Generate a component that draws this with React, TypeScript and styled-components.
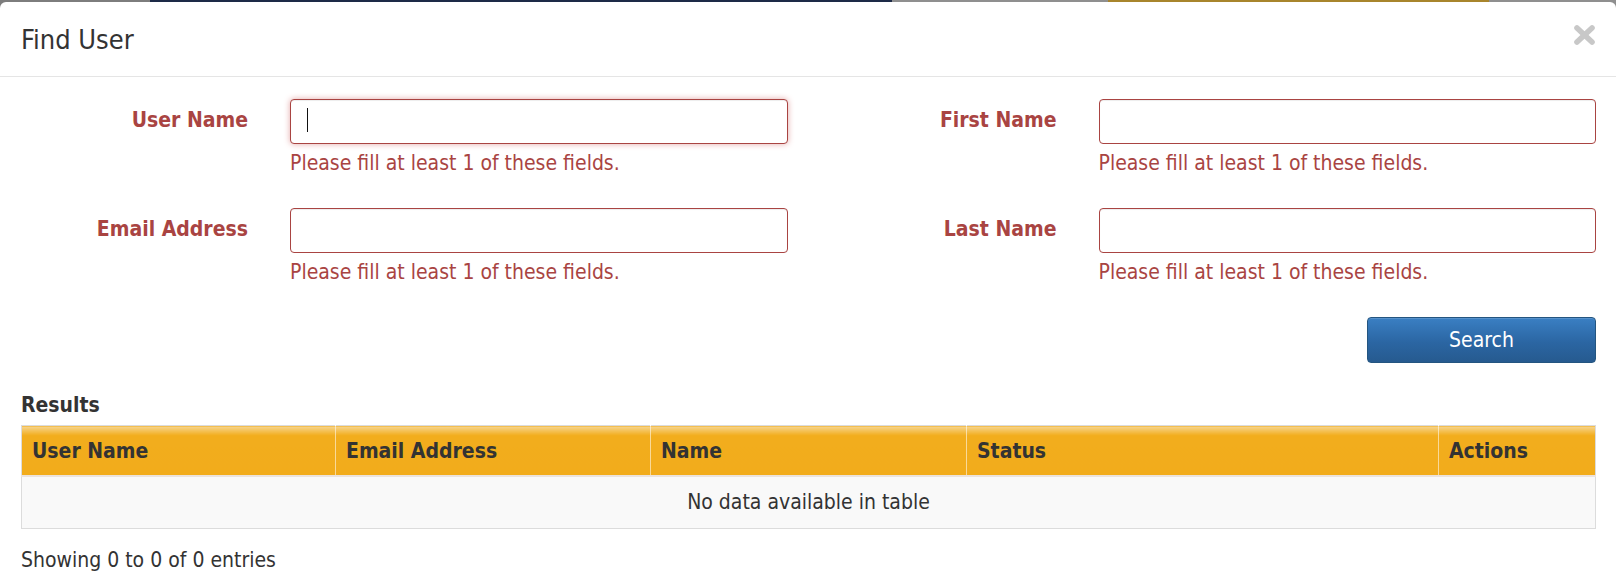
import React from "react";
import styled, { createGlobalStyle } from "styled-components";

const GlobalStyle = createGlobalStyle`
  html, body { margin: 0; padding: 0; }
  body {
    font-family: "DejaVu Sans Condensed", "DejaVu Sans", Verdana, sans-serif;
    color: #333;
    background: #fff;
  }
  * { box-sizing: border-box; }
`;

const Screen = styled.div`
  min-height: 100vh;
  padding-top: 2px;
  background: linear-gradient(
    to right,
    #7d7d7d 0 150px,
    #1d2a47 150px 892px,
    #8f8f8f 892px 1108px,
    #a8852c 1108px 1489px,
    #8f8f8f 1489px
  );
`;

const Modal = styled.div`
  min-height: calc(100vh - 2px);
  background: #fff;
  border-radius: 6px 6px 0 0;
`;

const Header = styled.div`
  height: 75px;
  padding: 1px 20px 0 21px;
  display: flex;
  align-items: center;
  justify-content: space-between;
  border-bottom: 1px solid #e5e5e5;
`;

const Title = styled.h4`
  margin: 0;
  font-size: 27px;
  font-weight: normal;
  color: #333;
`;

const CloseButton = styled.button`
  border: 0;
  background: transparent;
  padding: 0;
  margin: 0 0 9px 0;
  display: flex;
  cursor: pointer;
`;

const Body = styled.div`
  padding: 22px 20px 0 21px;
`;

const FormGrid = styled.div`
  display: grid;
  grid-template-columns: 227px 1fr 227px 1fr;
  column-gap: 42px;
  row-gap: 32px;
`;

const Label = styled.label`
  height: 45px;
  display: flex;
  align-items: center;
  justify-content: flex-end;
  padding-bottom: 3px;
  font-size: 21px;
  font-weight: bold;
  color: #a94442;
  white-space: nowrap;
`;

const Control = styled.div`
  display: flex;
  flex-direction: column;
`;

const InputWrap = styled.div`
  position: relative;
`;

const Input = styled.input<{ $focused?: boolean }>`
  display: block;
  width: 100%;
  height: 45px;
  padding: 6px 12px;
  font-family: inherit;
  font-size: 21px;
  color: #555;
  background: #fff;
  border: 1px solid #a94442;
  border-radius: 4px;
  outline: none;
  box-shadow: ${(p) =>
    p.$focused
      ? "inset 0 1px 1px rgba(0,0,0,.075), 0 0 6px #e4a9a8"
      : "inset 0 1px 1px rgba(0,0,0,.075)"};
`;

const Caret = styled.span`
  position: absolute;
  left: 17px;
  top: 9px;
  width: 1px;
  height: 24px;
  background: #111;
`;

const Help = styled.span`
  display: block;
  margin-top: 7px;
  font-size: 21px;
  line-height: 25px;
  color: #a94442;
  white-space: nowrap;
`;

const ButtonRow = styled.div`
  display: flex;
  justify-content: flex-end;
  margin-top: 32px;
`;

const SearchButton = styled.button`
  width: 229px;
  height: 46px;
  font-family: inherit;
  font-size: 21px;
  color: #fff;
  border: 1px solid #245580;
  border-radius: 4px;
  background: linear-gradient(to bottom, #3a7fc3 0%, #2b66a3 55%, #265a8f 100%);
  box-shadow: inset 0 1px 0 rgba(255,255,255,.15);
  cursor: pointer;
`;

const SectionTitle = styled.h5`
  margin: 30px 0 0;
  font-size: 21px;
  line-height: 25px;
  font-weight: bold;
  color: #333;
`;

const Table = styled.table`
  width: calc(100% - 1px);
  margin-top: 7px;
  border-collapse: collapse;
  border: 1px solid #dcdcdc;
  table-layout: fixed;
`;

const HeadCell = styled.th<{ $w: number }>`
  width: ${(p) => p.$w}px;
  height: 50px;
  padding: 2px 10px 0;
  text-align: left;
  font-size: 21px;
  font-weight: bold;
  color: #333;
  background: linear-gradient(to bottom, #f7d58e 0px, #f2ad1d 9px, #f2ac1b 100%);
  border-left: 1px solid rgba(255, 255, 255, 0.55);
  border-bottom: 2px solid #ece3dc;
  &:first-child { border-left: 0; }
`;

const EmptyCell = styled.td`
  height: 53px;
  padding: 0 10px;
  text-align: center;
  font-size: 21px;
  color: #333;
  background: #f9f9f9;
`;

const Info = styled.div`
  margin-top: 19px;
  font-size: 21px;
  line-height: 25px;
  color: #333;
`;

const CloseIcon = () => (
  <svg width="23" height="22" viewBox="0 0 23 22">
    <g stroke="#c8c8c8" strokeWidth="5.6" strokeLinecap="round">
      <line x1="4" y1="4" x2="19" y2="18" />
      <line x1="19" y1="4" x2="4" y2="18" />
    </g>
  </svg>
);

type Field = { label: string; focused?: boolean };

const fields: Field[] = [
  { label: "User Name", focused: true },
  { label: "First Name" },
  { label: "Email Address" },
  { label: "Last Name" },
];

const columns = [
  { title: "User Name", w: 314 },
  { title: "Email Address", w: 315 },
  { title: "Name", w: 316 },
  { title: "Status", w: 472 },
  { title: "Actions", w: 157 },
];

export default function App() {
  return (
    <>
      <GlobalStyle />
      <Screen>
        <Modal>
          <Header>
            <Title>Find User</Title>
            <CloseButton aria-label="Close">
              <CloseIcon />
            </CloseButton>
          </Header>
          <Body>
            <FormGrid>
              {fields.map((f) => (
                <React.Fragment key={f.label}>
                  <Label>{f.label}</Label>
                  <Control>
                    <InputWrap>
                      <Input type="text" $focused={f.focused} />
                      {f.focused && <Caret />}
                    </InputWrap>
                    <Help>Please fill at least 1 of these fields.</Help>
                  </Control>
                </React.Fragment>
              ))}
            </FormGrid>
            <ButtonRow>
              <SearchButton>Search</SearchButton>
            </ButtonRow>
            <SectionTitle>Results</SectionTitle>
            <Table>
              <thead>
                <tr>
                  {columns.map((c) => (
                    <HeadCell key={c.title} $w={c.w}>
                      {c.title}
                    </HeadCell>
                  ))}
                </tr>
              </thead>
              <tbody>
                <tr>
                  <EmptyCell colSpan={5}>No data available in table</EmptyCell>
                </tr>
              </tbody>
            </Table>
            <Info>Showing 0 to 0 of 0 entries</Info>
          </Body>
        </Modal>
      </Screen>
    </>
  );
}
